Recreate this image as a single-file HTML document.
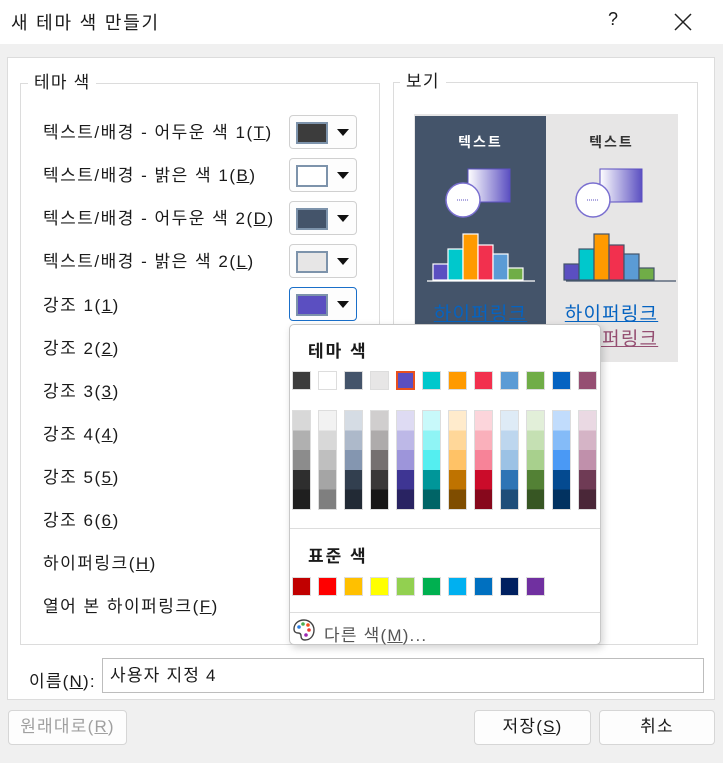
<!DOCTYPE html>
<html><head><meta charset="utf-8"><style>
*{box-sizing:border-box;margin:0;padding:0}
body{width:723px;height:763px;background:#f0f0f0;font-family:"Liberation Sans","Noto Sans CJK KR",sans-serif;color:#1a1a1a;position:relative;overflow:hidden;font-size:16px;letter-spacing:1.2px}
.a{position:absolute}
.title{left:0;top:0;width:723px;height:44px;background:#fff}
.panel{left:7px;top:57px;width:708px;height:643px;background:#fff;border:1px solid #dcdcdc}
.gb{border:1px solid #dcdcdc}
.lbl{background:#fff;padding:0 6px;line-height:20px;font-size:17px}
.row{left:43px;line-height:20px;font-size:17px;letter-spacing:1.5px}
.btn{left:289px;width:68px;height:34px;border:1px solid #d0d0d0;border-radius:4px;background:#fdfdfd}
.btn .c{position:absolute;left:6px;top:6px;width:32px;height:22px;border:2px solid #7d93ab}
.btn .ar{position:absolute;left:47px;top:13px;width:0;height:0;border-left:6px solid transparent;border-right:6px solid transparent;border-top:7px solid #111}
u{text-decoration:underline}
.sw{position:absolute;width:19px;height:19px;border:1px solid #ddd}
.pb{position:absolute;border:1px solid #d6d6d6;border-radius:4px;background:#fdfdfd;text-align:center;line-height:32px;font-size:17px}
</style></head><body>
<div class="a title"></div>
<div class="a" style="left:11px;top:9px;font-size:18px;letter-spacing:1.8px">새 테마 색 만들기</div>
<div class="a" style="left:608px;top:9px;font-size:18px">?</div>
<svg class="a" style="left:674px;top:13px" width="18" height="18"><path d="M1 1L17 17M17 1L1 17" stroke="#222" stroke-width="1.5"/></svg>
<div class="a panel"></div>
<div class="a gb" style="left:20px;top:83px;width:360px;height:562px"></div>
<div class="a lbl" style="left:28px;top:73px">테마 색</div>
<div class="a gb" style="left:393px;top:82px;width:305px;height:563px"></div>
<div class="a lbl" style="left:400px;top:72px">보기</div>

<div class="a row" style="top:123px">텍스트/배경 - 어두운 색 1(<u>T</u>)</div>
<div class="a row" style="top:166px">텍스트/배경 - 밝은 색 1(<u>B</u>)</div>
<div class="a row" style="top:209px">텍스트/배경 - 어두운 색 2(<u>D</u>)</div>
<div class="a row" style="top:252px">텍스트/배경 - 밝은 색 2(<u>L</u>)</div>
<div class="a row" style="top:296px">강조 1(<u>1</u>)</div>
<div class="a row" style="top:339px">강조 2(<u>2</u>)</div>
<div class="a row" style="top:382px">강조 3(<u>3</u>)</div>
<div class="a row" style="top:425px">강조 4(<u>4</u>)</div>
<div class="a row" style="top:468px">강조 5(<u>5</u>)</div>
<div class="a row" style="top:511px">강조 6(<u>6</u>)</div>
<div class="a row" style="top:554px">하이퍼링크(<u>H</u>)</div>
<div class="a row" style="top:597px">열어 본 하이퍼링크(<u>F</u>)</div>

<div class="a btn" style="top:115px"><div class="c" style="background:#3c3c3c"></div><div class="ar"></div></div>
<div class="a btn" style="top:158px"><div class="c" style="background:#fff"></div><div class="ar"></div></div>
<div class="a btn" style="top:201px"><div class="c" style="background:#44546a"></div><div class="ar"></div></div>
<div class="a btn" style="top:244px"><div class="c" style="background:#e7e6e6"></div><div class="ar"></div></div>
<div class="a btn" style="top:287px;border-color:#1a6fc9"><div class="c" style="background:#5b4fc1"></div><div class="ar"></div></div>

<!-- preview -->
<div class="a" style="left:414px;top:114px;width:264px;height:248px;background:#e7e6e6"></div>
<div class="a" style="left:415px;top:116px;width:131px;height:246px;background:#44546a"></div>
<div class="a" style="left:415px;top:132px;width:131px;text-align:center;color:#fff;font-weight:bold;font-size:14px;letter-spacing:2px">텍스트</div>
<div class="a" style="left:546px;top:132px;width:131px;text-align:center;color:#333;font-weight:bold;font-size:14px;letter-spacing:2px">텍스트</div>
<svg class="a" style="left:415px;top:160px" width="263" height="125">
<defs><linearGradient id="g"><stop offset="0" stop-color="#fff"/><stop offset="1" stop-color="#5b4fc1"/></linearGradient></defs>
<rect x="53" y="9" width="42" height="33" fill="url(#g)" stroke="#5b4fc1"/>
<circle cx="48" cy="40" r="17" fill="#fff" stroke="#7a6fd0" stroke-width="1.5"/>
<path d="M42 40h12" stroke="#5b4fc1" stroke-dasharray="1 1"/>
<rect x="185" y="9" width="42" height="33" fill="url(#g)" stroke="#5b4fc1"/>
<circle cx="178" cy="40" r="17" fill="#fff" stroke="#7a6fd0" stroke-width="1.5"/>
<path d="M172 40h12" stroke="#5b4fc1" stroke-dasharray="1 1"/>
<g stroke="#fff" stroke-width="1.2">
<rect x="18" y="104" width="15" height="16" fill="#5b4fc1"/><rect x="33" y="89" width="15" height="31" fill="#00c8cc"/><rect x="48" y="74" width="15" height="46" fill="#ff9a00"/><rect x="63" y="85" width="15" height="35" fill="#f2304e"/><rect x="78" y="94" width="15" height="26" fill="#5b9bd5"/><rect x="93" y="108" width="15" height="12" fill="#70ad47"/>
<path d="M12 121h108"/></g>
<g stroke="#44546a" stroke-width="1.2">
<rect x="149" y="104" width="15" height="16" fill="#5b4fc1"/><rect x="164" y="89" width="15" height="31" fill="#00c8cc"/><rect x="179" y="74" width="15" height="46" fill="#ff9a00"/><rect x="194" y="85" width="15" height="35" fill="#f2304e"/><rect x="209" y="94" width="15" height="26" fill="#5b9bd5"/><rect x="224" y="108" width="15" height="12" fill="#70ad47"/>
<path d="M151 121h110"/></g>
</svg>
<div class="a" style="left:415px;top:299px;width:131px;text-align:center;color:#0563c1;font-size:19px;text-decoration:underline">하이퍼링크</div>
<div class="a" style="left:546px;top:299px;width:131px;text-align:center;color:#0563c1;font-size:19px;text-decoration:underline">하이퍼링크</div>
<div class="a" style="left:546px;top:324px;width:131px;text-align:center;color:#954f72;font-size:19px;text-decoration:underline">하이퍼링크</div>

<!-- popup -->
<div class="a" style="left:289px;top:324px;width:312px;height:321px;background:#fff;border:1px solid #c8c8c8;border-radius:5px;box-shadow:2px 3px 8px rgba(0,0,0,.18)">
<div class="a" style="left:18px;top:12px;font-weight:bold;font-size:17px;letter-spacing:2px">테마 색</div>
<div class="a" style="left:0;top:203px;width:310px;border-top:1px solid #ddd"></div>
<div class="a" style="left:18px;top:217px;font-weight:bold;font-size:17px;letter-spacing:2px">표준 색</div>
<div class="a" style="left:0;top:287px;width:310px;border-top:1px solid #ddd"></div>
<svg class="a" style="left:2px;top:293px" width="24" height="24"><path d="M12 2C6 2 2 6 2 11c0 3 2 4 4 4s3 1 3 3 1 4 4 4c6 0 9-5 9-10S18 2 12 2z" fill="#fff" stroke="#444" stroke-width="1.4"/><circle cx="7" cy="9" r="1.8" fill="#2b7de0"/><circle cx="11" cy="6" r="1.8" fill="#4caf50"/><circle cx="16" cy="7" r="1.8" fill="#f4511e"/><circle cx="17" cy="12" r="1.8" fill="#e53935"/><circle cx="14" cy="17" r="1.8" fill="#9c27b0"/></svg>
<div class="a" style="left:34px;top:296px;color:#555;font-size:17px">다른 색(<u>M</u>)...</div>
</div>
<div id="sw"></div>
<script>
var th=['#3c3c3c','#ffffff','#44546a','#e7e6e6','#5b4fc1','#00c8cc','#ff9a00','#f2304e','#5b9bd5','#70ad47','#0563c1','#954f72'];
var sh=[['#d8d8d8','#b0b0b0','#8c8c8c','#2e2e2e','#1f1f1f'],['#f2f2f2','#d8d8d8','#bfbfbf','#a5a5a5','#7f7f7f'],['#d5dce4','#adb9ca','#8496b0','#323f4f','#222a35'],['#d0cece','#aeabab','#757070','#3a3838','#171616'],['#dedbf3','#bdb8e7','#9d95da','#3e3593','#292362'],['#c8f9fa','#8ff4f5','#54eef0','#009699','#006466'],['#ffebcc','#ffd799','#ffc266','#bf7300','#7f4d00'],['#fcd5db','#fab0bb','#f78398','#cb0c2a','#87081c'],['#deebf6','#bdd6ee','#9cc2e5','#2e74b5','#1f4e79'],['#e2efd9','#c5e0b3','#a8d08d','#538135','#375623'],['#c1dcfc','#84bbf8','#4a99f5','#044a90','#023260'],['#ead9e3','#d5b4c6','#c090ab','#6f3b55','#4a2738']];
var st=['#c00000','#ff0000','#ffc000','#ffff00','#92d050','#00b050','#00b0f0','#0070c0','#002060','#7030a0'];
var h='';
for(var i=0;i<12;i++){var x=292+26*i;
h+='<div class="sw" style="left:'+x+'px;top:371px;background:'+th[i]+(i==4?';border:2px solid #e8501e':'')+'"></div>';
h+='<div class="sw" style="left:'+x+'px;top:410px;height:100px;background:linear-gradient('+sh[i].map(function(c,k){return c+' '+(k*20)+'%,'+c+' '+((k+1)*20)+'%'}).join(',')+')"></div>';}
for(var j=0;j<10;j++){h+='<div class="sw" style="left:'+(292+26*j)+'px;top:577px;background:'+st[j]+'"></div>';}
document.getElementById('sw').innerHTML=h;
</script>

<div class="a" style="left:29px;top:667px;font-size:17px">이름(<u>N</u>):</div>
<div class="a" style="left:102px;top:658px;width:602px;height:35px;border:1px solid #bdbdbd;background:#fff;padding:7px 7px;line-height:20px;font-size:17px">사용자 지정 4</div>

<div class="pb" style="left:8px;top:710px;width:119px;height:35px;color:#a0a0a0">원래대로(<u>R</u>)</div>
<div class="pb" style="left:474px;top:710px;width:117px;height:35px">저장(<u>S</u>)</div>
<div class="pb" style="left:599px;top:710px;width:116px;height:35px">취소</div>
</body></html>
